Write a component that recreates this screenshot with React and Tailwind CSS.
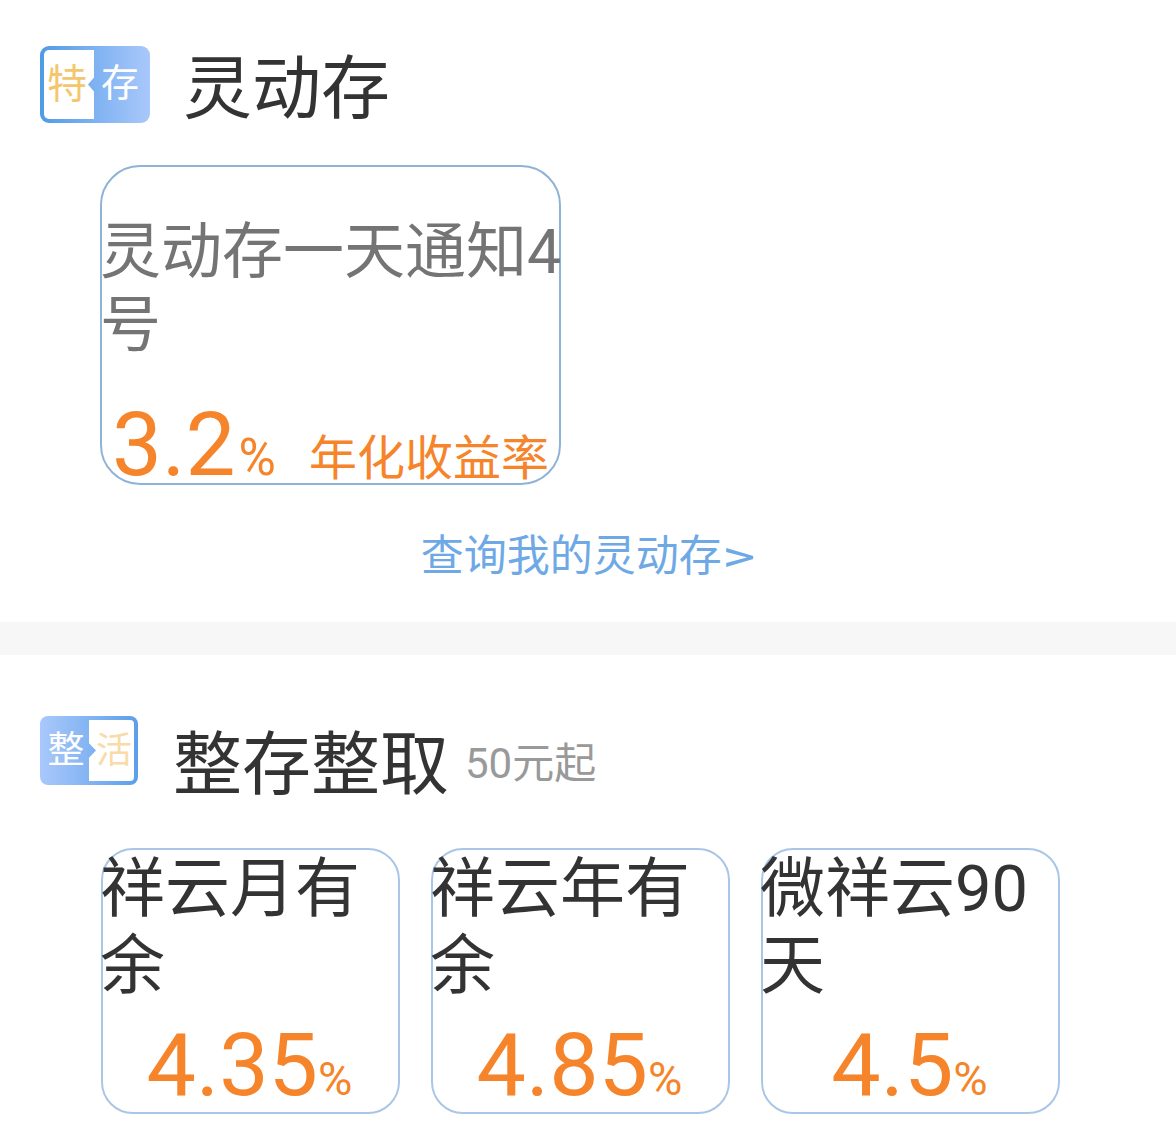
const font = { fontFamily: 'Roboto, "Noto Sans CJK SC", sans-serif' }

function Badge({ left, right, flip }) {
  if (flip) {
    return (
      <div className="flex h-[69px] w-[98px] shrink-0 rounded-[8px] bg-gradient-to-r from-[#a9c8fb] to-[#5b9fe9] p-[4px_4px_4px_0]">
        <div className="flex w-[49px] items-center justify-center pl-[3px] text-[37px] leading-none text-white">{left}</div>
        <div className="flex flex-1 items-center justify-center rounded-r-[4px] bg-white pl-[5px] text-[36px] leading-none text-[#f8dba9] [clip-path:polygon(0_0,100%_0,100%_100%,0_100%,0_62%,7px_50%,0_38%)]">{right}</div>
      </div>
    )
  }
  return (
    <div className="flex h-[77px] w-[110px] shrink-0 rounded-[9px] bg-gradient-to-r from-[#4f9be6] to-[#a9c8fb] p-[4px_0_4px_4px]">
      <div className="flex w-[50px] items-center justify-center rounded-l-[5px] bg-white pr-[4px] text-[40px] leading-none text-[#f3c76f] [clip-path:polygon(0_0,100%_0,100%_40%,calc(100%-6px)_50%,100%_60%,100%_100%,0_100%)]">{left}</div>
      <div className="flex flex-1 items-center justify-center pb-[4px] pl-[2px] pr-[6px] text-[38px] leading-none text-white">{right}</div>
    </div>
  )
}

function RateCard({ name, rate }) {
  return (
    <div className="h-[266px] w-[299px] rounded-[32px] border-2 border-[#a9c6e6] bg-white">
      <div className="ml-[-3px] h-[165px] pt-[1px] text-[65px] leading-[77px] text-[#333333]">{name}</div>
      <div className="flex items-baseline justify-center pr-[2px] text-[#f5842a]">
        <span className="text-[88px] leading-[100px]">{rate}</span>
        <span className="text-[47px] leading-none">%</span>
      </div>
    </div>
  )
}

export default function App() {
  const products = [
    { name: '祥云月有余', rate: '4.35' },
    { name: '祥云年有余', rate: '4.85' },
    { name: '微祥云90天', rate: '4.5' },
  ]

  return (
    <div className="h-[1134px] w-[1176px] overflow-hidden bg-white" style={font}>
      <section className="h-[622px] pl-[40px] pt-[46px]">
        <div className="flex h-[77px] items-start gap-[33px]">
          <Badge left="特" right="存" />
          <h2 className="mt-[9px] text-[69px] leading-none text-[#333333]">灵动存</h2>
        </div>
        <div className="ml-[60px] mt-[42px] h-[320px] w-[461px] rounded-[40px] border-2 border-[#8fb3d6] bg-white">
          <div className="ml-[-2px] mr-[-6px] h-[242px] pt-[49px] text-[61px] leading-[73px] text-[#747474]">灵动存一天通知4号</div>
          <div className="flex items-baseline pl-[10px] text-[#f5842a]">
            <span className="text-[89px] leading-[72px]">3.2</span>
            <span className="ml-[3px] text-[51px] leading-none">%</span>
            <span className="ml-[33px] text-[48px] leading-none">年化收益率</span>
          </div>
        </div>
        <div className="mt-[46px] pr-[34px] text-center text-[43px] leading-[50px] text-[#6ea9e6]">
          查询我的灵动存<span className="inline-block origin-left scale-x-[1.5] pr-[17px]">&gt;</span>
        </div>
      </section>

      <div className="h-[33px] bg-[#f7f7f7]" />

      <section className="pl-[40px] pt-[61px]">
        <div className="flex h-[69px] items-start">
          <Badge left="整" right="活" flip />
          <h2 className="ml-[35px] mt-[15px] text-[69px] leading-none text-[#333333]">整存整取</h2>
          <span className="ml-[16px] mt-[27px] text-[42px] leading-none text-[#999999]">50元起</span>
        </div>
        <div className="ml-[61px] mt-[63px] flex gap-[31px]">
          {products.map((p) => (
            <RateCard key={p.name} name={p.name} rate={p.rate} />
          ))}
        </div>
      </section>
    </div>
  )
}
